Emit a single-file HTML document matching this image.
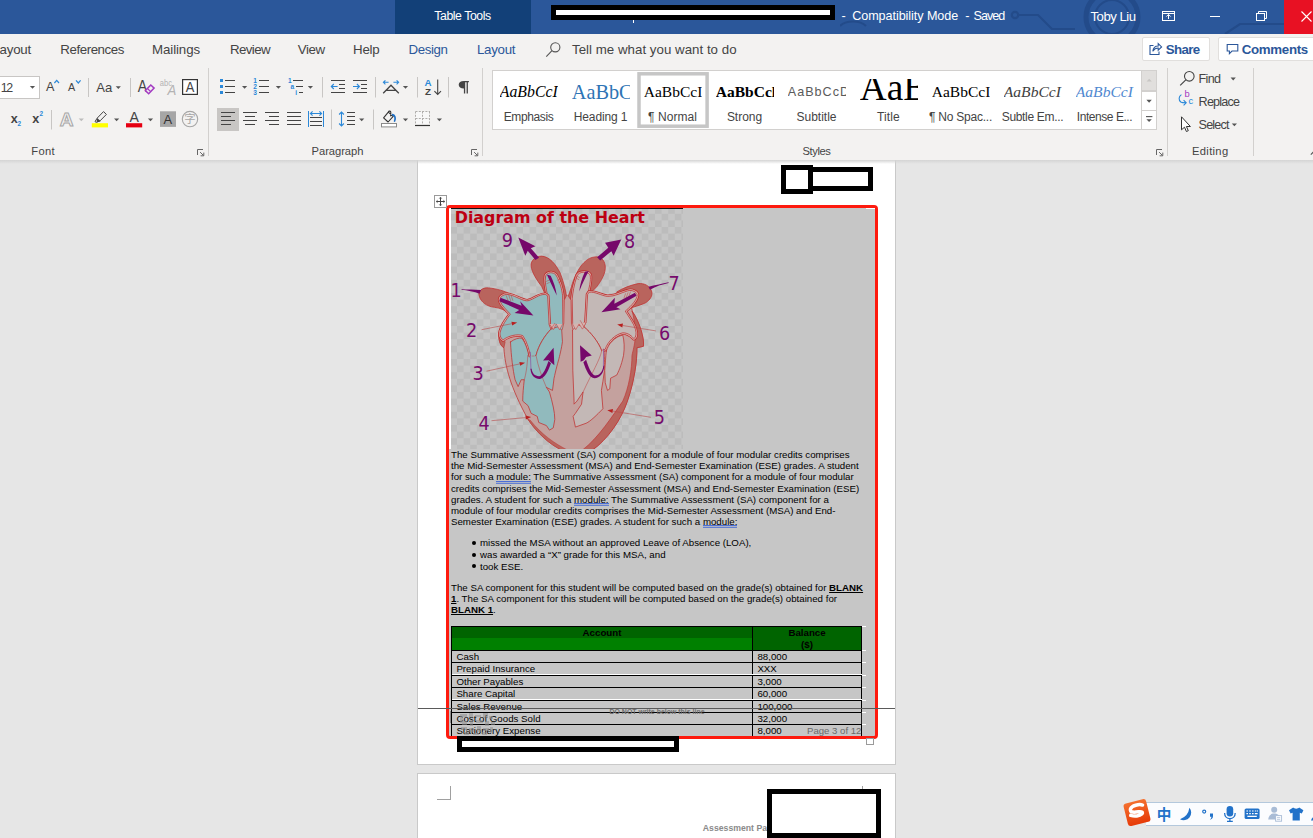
<!DOCTYPE html>
<html lang="en">
<head>
<meta charset="utf-8">
<title>Word</title>
<style>
*{box-sizing:border-box;margin:0;padding:0}
html,body{width:1313px;height:838px;overflow:hidden;background:#e6e6e6;font-family:"Liberation Sans",sans-serif;color:#444}
.abs,#app>div,#app>svg,#app>span{position:absolute}
#app{position:relative;width:1313px;height:838px;overflow:hidden}
/* title bar */
#title{left:0;top:0;width:1313px;height:34px;background:#2b579a}
#tt{left:395px;top:0;width:136px;height:34px;background:#124078;color:#fff;font-size:12px;text-align:center;line-height:33px}
.tw{color:#fff;font-size:12.5px;white-space:nowrap;line-height:16px}
#close{left:1284px;top:0;width:29px;height:34px;background:#e81123}
/* tabs */
#tabs{left:0;top:34px;width:1313px;height:32px;background:#f3f2f1}
.tab{top:41px;font-size:12.6px;color:#444;white-space:nowrap;line-height:16px}
.tab.b{color:#2b579a}
.btn{top:37px;height:24px;background:#fff;border:1px solid #e1dfdd;border-radius:2px}
/* ribbon */
#ribbon{left:0;top:66px;width:1313px;height:94px;background:#f3f2f1}
.sep{top:68px;width:1px;height:88px;background:#d2d0ce}
.glabel{top:145px;font-size:11.6px;color:#444;white-space:nowrap;line-height:14px}
/* doc */
#page1{left:417px;top:160px;width:479px;height:605px;background:#fff;border:1px solid #c9c9c9;border-top:none}
#page2{left:417px;top:773px;width:479px;height:80px;background:#fff;border:1px solid #c9c9c9}
#shadow{left:0;top:160px;width:1313px;height:4px;background:linear-gradient(#d4d4d4,rgba(230,230,230,0))}
#sel{left:449px;top:208px;width:426px;height:528px;background:#c6c6c6}
#red{left:446px;top:205px;width:432px;height:534px;border:3px solid #fe1a0e;border-radius:4px}
.t{font-family:"Liberation Sans",sans-serif;font-size:9.71px;line-height:11px;color:#000;white-space:nowrap;left:451px}
.t b{font-weight:700}
.u{text-decoration:underline}
.sq{position:relative}
.sq::after{content:"";position:absolute;left:0;right:0;top:9.5px;height:1px;background:#3f66d8;box-shadow:0 1.8px 0 #3f66d8;opacity:.9}
.dot{width:4px;height:4px;border-radius:50%;background:#000}
.blk{background:#000}
.wht{background:#fff}
</style>
</head>
<body>
<div id="app">
<!-- TITLE BAR -->
<div id="title"></div>
<div id="tt"></div>
<div id="close"></div>
<svg style="left:840px;top:0" width="473" height="34" viewBox="840 0 473 34"><g fill="none" stroke="#234b8a" stroke-width="2.2"><circle cx="1015" cy="15" r="3.2"/><path d="M1018 15 H1038 L1052 29 H1075"/><circle cx="1112" cy="17" r="26" stroke-width="5"/><circle cx="1112" cy="17" r="17" stroke-width="2"/><path d="M1225 34 L1240 24 H1284"/><path d="M840 26 C846 20 860 20 866 26"/></g></svg>
<div class="blk" style="left:551px;top:5px;width:284px;height:15px"></div>
<div class="wht" style="left:556px;top:10px;width:274px;height:5px"></div>
<div class="wht" style="left:633px;top:20px;width:1px;height:3px"></div>
<div style="left:434.3px;top:7.84px;font-family:'Liberation Sans',sans-serif;font-size:12.3px;line-height:16px;color:#fff;letter-spacing:-0.438px;white-space:nowrap;">Table Tools</div>
<div style="left:841.4px;top:7.73px;font-family:'Liberation Sans',sans-serif;font-size:12.6px;line-height:16px;color:#fff;letter-spacing:-0.096px;white-space:nowrap;">-</div>
<div style="left:852.2px;top:7.73px;font-family:'Liberation Sans',sans-serif;font-size:12.6px;line-height:16px;color:#fff;letter-spacing:-0.064px;white-space:nowrap;">Compatibility Mode</div>
<div style="left:965.3px;top:7.73px;font-family:'Liberation Sans',sans-serif;font-size:12.6px;line-height:16px;color:#fff;letter-spacing:-0.096px;white-space:nowrap;">-</div>
<div style="left:973.6px;top:7.73px;font-family:'Liberation Sans',sans-serif;font-size:12.6px;line-height:16px;color:#fff;letter-spacing:-0.985px;white-space:nowrap;">Saved</div>
<div style="left:1090.5px;top:7.73px;font-family:'Liberation Sans',sans-serif;font-size:13.2px;line-height:17px;color:#fff;letter-spacing:-0.521px;white-space:nowrap;">Toby Liu</div>
<svg style="left:1155px;top:5px" width="158" height="24" viewBox="1155 5 158 24" fill="none" stroke="#fff" stroke-width="1"><rect x="1162.5" y="11.5" width="12" height="9"/><path d="M1162.5 13.5h12" /><path d="M1168.5 19v-4.2M1166.3 16.6l2.2-2.2 2.2 2.2"/><path d="M1210 16.5h10"/><rect x="1256.5" y="13.5" width="8" height="7"/><path d="M1258.5 13.5v-2h8v7h-2"/><path d="M1301.5 11.5l10 10M1311.5 11.5l-10 10" stroke-width="1.1"/></svg>
<!-- TABS -->
<div id="tabs"></div>
<div style="left:-0.5px;top:40.69px;font-family:'Liberation Sans',sans-serif;font-size:13.3px;line-height:17px;color:#444;letter-spacing:-0.207px;white-space:nowrap;">ayout</div>
<div style="left:60.3px;top:40.69px;font-family:'Liberation Sans',sans-serif;font-size:13.3px;line-height:17px;color:#444;letter-spacing:-0.431px;white-space:nowrap;">References</div>
<div style="left:152.0px;top:40.69px;font-family:'Liberation Sans',sans-serif;font-size:13.3px;line-height:17px;color:#444;letter-spacing:-0.098px;white-space:nowrap;">Mailings</div>
<div style="left:229.9px;top:40.69px;font-family:'Liberation Sans',sans-serif;font-size:13.3px;line-height:17px;color:#444;letter-spacing:-0.568px;white-space:nowrap;">Review</div>
<div style="left:297.7px;top:40.69px;font-family:'Liberation Sans',sans-serif;font-size:13.3px;line-height:17px;color:#444;letter-spacing:-0.347px;white-space:nowrap;">View</div>
<div style="left:353.1px;top:40.69px;font-family:'Liberation Sans',sans-serif;font-size:13.3px;line-height:17px;color:#444;letter-spacing:-0.238px;white-space:nowrap;">Help</div>
<div style="left:408.4px;top:40.69px;font-family:'Liberation Sans',sans-serif;font-size:13.3px;line-height:17px;color:#2b579a;letter-spacing:-0.367px;white-space:nowrap;">Design</div>
<div style="left:477.0px;top:40.69px;font-family:'Liberation Sans',sans-serif;font-size:13.3px;line-height:17px;color:#2b579a;letter-spacing:-0.289px;white-space:nowrap;">Layout</div>
<div style="left:572.0px;top:40.69px;font-family:'Liberation Sans',sans-serif;font-size:13.3px;line-height:17px;color:#444;letter-spacing:0.018px;white-space:nowrap;">Tell me what you want to do</div>
<svg style="left:545px;top:41px" width="17" height="17" viewBox="0 0 17 17" fill="none" stroke="#555" stroke-width="1.1"><circle cx="10.3" cy="6.3" r="4.6"/><path d="M7 9.7L1.3 15.6"/></svg>
<div class="btn" style="left:1142px;width:68px"></div>
<div class="btn" style="left:1218px;width:100px"></div>
<svg style="left:1148px;top:41px" width="15" height="16" viewBox="0 0 15 16" fill="none" stroke="#2b579a" stroke-width="1.1"><path d="M5.5 4.5H2V13.5H11V10.5"/><path d="M4.8 10.2C5.2 6.8 7.4 5 10.2 5V2.6L13.6 5.9L10.2 9.2V7C8 7 6.2 8 4.8 10.2Z"/></svg>
<div style="left:1165.7px;top:40.69px;font-family:'Liberation Sans',sans-serif;font-size:13.3px;line-height:17px;color:#2b579a;letter-spacing:-0.613px;white-space:nowrap;font-weight:700;transform:scaleY(.97);">Share</div>
<svg style="left:1225px;top:42px" width="15" height="14" viewBox="0 0 15 14" fill="none" stroke="#2b579a" stroke-width="1.1"><path d="M2.2 2.5H12.8V9H7L4.4 11.6V9H2.2Z"/></svg>
<div style="left:1241.8px;top:40.69px;font-family:'Liberation Sans',sans-serif;font-size:13.3px;line-height:17px;color:#2b579a;letter-spacing:-0.328px;white-space:nowrap;font-weight:700;">Comments</div>
<!-- RIBBON -->
<div id="ribbon"></div>
<div class="sep" style="left:208.0px"></div>
<div class="sep" style="left:482.0px"></div>
<div class="sep" style="left:1167.0px"></div>
<div class="sep" style="left:1253.0px"></div>
<div style="left:31.3px;top:144.32px;font-family:'Liberation Sans',sans-serif;font-size:11.2px;line-height:15px;color:#444;letter-spacing:0.272px;white-space:nowrap;">Font</div>
<div style="left:311.6px;top:144.32px;font-family:'Liberation Sans',sans-serif;font-size:11.2px;line-height:15px;color:#444;letter-spacing:-0.056px;white-space:nowrap;">Paragraph</div>
<div style="left:802.6px;top:144.32px;font-family:'Liberation Sans',sans-serif;font-size:11.2px;line-height:15px;color:#444;letter-spacing:-0.433px;white-space:nowrap;">Styles</div>
<div style="left:1192.0px;top:144.32px;font-family:'Liberation Sans',sans-serif;font-size:11.2px;line-height:15px;color:#444;letter-spacing:0.322px;white-space:nowrap;">Editing</div>
<div style="left:-2px;top:76px;width:42px;height:23px;background:#fff;border:1px solid #c8c6c4"></div>
<div style="left:0.8px;top:79.70px;font-family:'Liberation Sans',sans-serif;font-size:12.4px;line-height:16px;color:#444;letter-spacing:-1.396px;white-space:nowrap;">12</div>
<svg style="left:0;top:66px" width="1313" height="94" viewBox="0 66 1313 94" font-family="Liberation Sans,sans-serif"><path d="M29.9 86.0h5.2l-2.6 2.8z" fill="#555" stroke="none"/>
<text x="46" y="91" font-size="12.6" fill="#444">A</text><path d="M54.4 83l2.3-2.6 2.3 2.6" stroke="#2b88d8" stroke-width="1.2" fill="none"/>
<text x="68" y="91" font-size="10.8" fill="#444">A</text><path d="M76 80.4l2.3 2.6 2.3-2.6" stroke="#2b88d8" stroke-width="1.2" fill="none"/>
<path d="M88.5 78V97" stroke="#c8c6c4" stroke-width="1" fill="none"/>
<text x="96.3" y="92" font-size="13" fill="#444" textLength="16" lengthAdjust="spacingAndGlyphs">Aa</text><path d="M115.7 86.3h5.2l-2.6 2.8z" fill="#555" stroke="none"/>
<path d="M130.5 78V97" stroke="#c8c6c4" stroke-width="1" fill="none"/>
<text x="137.8" y="91.9" font-size="17.4" fill="#444" textLength="9.4" lengthAdjust="spacingAndGlyphs">A</text><path d="M145.4 90.6l5.4-5.6 3.3 3.1-5.4 5.6z" stroke="#a33bc2" stroke-width="1.5" fill="#f3f2f1"/><path d="M147.4 88.5l3.3 3.1" stroke="#a33bc2" stroke-width="1.2"/>
<text x="159.8" y="85.7" font-size="8.2" fill="#b3b3b3" textLength="12.2" lengthAdjust="spacingAndGlyphs">abc</text><text x="167.4" y="94.8" font-size="15.2" font-style="italic" fill="#b3b3b3" textLength="8.8" lengthAdjust="spacingAndGlyphs">A</text>
<rect x="182.6" y="79.6" width="14.8" height="14.8" fill="#fff" stroke="#333" stroke-width="1.2"/><text x="190" y="92.3" font-size="14" fill="#444" text-anchor="middle" textLength="8.6" lengthAdjust="spacingAndGlyphs">A</text>
<text x="10.8" y="123" font-size="12.6" font-weight="700" fill="#444">x</text><text x="17.6" y="126.4" font-size="6.4" font-weight="700" fill="#2b88d8">2</text>
<text x="32.2" y="123" font-size="12.6" font-weight="700" fill="#444">x</text><text x="39.6" y="116.4" font-size="6.4" font-weight="700" fill="#2b88d8">2</text>
<path d="M51.5 110V129.5" stroke="#c8c6c4" stroke-width="1" fill="none"/>
<text x="66.7" y="125.7" font-size="19" font-weight="700" fill="#f3f2f1" stroke="#a6a6a6" stroke-width="1" text-anchor="middle">A</text><path d="M78.7 118.5h5.2l-2.6 2.8z" fill="#bcbcbc" stroke="none"/>
<rect x="91.8" y="123.2" width="16.2" height="4.2" fill="#ffff00"/><path d="M95 121.6l2.3-3.6 6.2-6.4 2.9 2.8-6.3 6.4-3.6 1.6z" fill="none" stroke="#444" stroke-width="1"/><path d="M97.3 118l3.4 3.2-2.6.9-1.6-.3z" fill="#444"/><path d="M114.0 118.5h5.2l-2.6 2.8z" fill="#555" stroke="none"/>
<rect x="126" y="123.2" width="16.2" height="4.2" fill="#e60012"/><text x="134.3" y="121.7" font-size="14.6" fill="#444" text-anchor="middle" textLength="9.4" lengthAdjust="spacingAndGlyphs">A</text><path d="M147.9 118.5h5.2l-2.6 2.8z" fill="#555" stroke="none"/>
<rect x="160" y="111.3" width="16" height="15.6" fill="#a6a6a6"/><text x="167.8" y="124.1" font-size="13.4" fill="#333" text-anchor="middle" textLength="8.6" lengthAdjust="spacingAndGlyphs">A</text>
<circle cx="190" cy="119.1" r="7.7" fill="none" stroke="#a6a6a6" stroke-width="1.1"/><text x="190" y="123.4" font-size="11.4" fill="#a6a6a6" text-anchor="middle" font-family="Noto Sans CJK SC,sans-serif">字</text>
<path d="M203.0 149.5H197.5V155" stroke="#666" stroke-width="1" fill="none"/><path d="M200.1 152.1l3.4 3.4M203.8 152.6v3.2h-3.2" stroke="#666" stroke-width="1" fill="none"/>
<path d="M477.0 149.5H471.5V155" stroke="#666" stroke-width="1" fill="none"/><path d="M474.1 152.1l3.4 3.4M477.8 152.6v3.2h-3.2" stroke="#666" stroke-width="1" fill="none"/>
<path d="M1162.0 149.5H1156.5V155" stroke="#666" stroke-width="1" fill="none"/><path d="M1159.1 152.1l3.4 3.4M1162.8 152.6v3.2h-3.2" stroke="#666" stroke-width="1" fill="none"/>
<path d="M225 80.5H235M225 86.5H235M225 92.5H235" stroke="#444" stroke-width="1" fill="none"/>
<rect x="220" y="79.0" width="3" height="3" fill="#2b88d8"/>
<rect x="220" y="85.0" width="3" height="3" fill="#2b88d8"/>
<rect x="220" y="91.0" width="3" height="3" fill="#2b88d8"/>
<path d="M242.0 86.0h5.2l-2.6 2.8z" fill="#555" stroke="none"/>
<path d="M259 80.5H269M259 86.5H269M259 92.5H269" stroke="#444" stroke-width="1" fill="none"/>
<text x="253.3" y="82.8" font-size="6.6" font-weight="700" fill="#2b88d8">1</text>
<text x="253.3" y="88.8" font-size="6.6" font-weight="700" fill="#2b88d8">2</text>
<text x="253.3" y="94.8" font-size="6.6" font-weight="700" fill="#2b88d8">3</text>
<path d="M275.8 86.0h5.2l-2.6 2.8z" fill="#555" stroke="none"/>
<path d="M293 80.5H303M296 86.5H303M299 92.5H303" stroke="#444" stroke-width="1" fill="none"/>
<text x="288" y="82.8" font-size="6.6" font-weight="700" fill="#2b88d8">1</text><text x="290.6" y="89" font-size="6.6" font-weight="700" fill="#2b88d8">a</text><text x="295.3" y="95.2" font-size="6.6" font-weight="700" fill="#2b88d8">i</text>
<path d="M307.8 86.0h5.2l-2.6 2.8z" fill="#555" stroke="none"/>
<path d="M322.5 77V97.5" stroke="#c8c6c4" stroke-width="1" fill="none"/>
<path d="M331 80.5H345M339 84.5H345M339 88.5H345M331 92.5H345" stroke="#444" stroke-width="1" fill="none"/><path d="M331.3 86.5H337.6M333.8 84l-2.5 2.5 2.5 2.5" stroke="#2b88d8" stroke-width="1.1" fill="none"/>
<path d="M353 80.5H367M361 84.5H367M361 88.5H367M353 92.5H367" stroke="#444" stroke-width="1" fill="none"/><path d="M353 86.5H359.4M356.9 84l2.5 2.5-2.5 2.5" stroke="#2b88d8" stroke-width="1.1" fill="none"/>
<path d="M375.5 77V97.5" stroke="#c8c6c4" stroke-width="1" fill="none"/>
<path d="M383.2 93.3L391 85.3L398.8 93.3M386.3 90.3H395.7" stroke="#444" stroke-width="1.3" fill="none"/><path d="M383.4 82.3H388.6M385.4 80.3l-2 2 2 2M393.4 82.3H398.6M396.6 80.3l2 2-2 2" stroke="#2b88d8" stroke-width="1.1" fill="none"/><path d="M402.9 86.0h5.2l-2.6 2.8z" fill="#555" stroke="none"/>
<path d="M417.5 77V97.5" stroke="#c8c6c4" stroke-width="1" fill="none"/>
<text x="424.4" y="86.2" font-size="9.8" font-weight="700" fill="#2b88d8">A</text><text x="424.9" y="94.9" font-size="9.8" font-weight="700" fill="#444">Z</text><path d="M437.7 79.5V94.4M434.4 91.2l3.3 3.3 3.3-3.3" stroke="#444" stroke-width="1.1" fill="none"/>
<path d="M448.5 77V97.5" stroke="#c8c6c4" stroke-width="1" fill="none"/>
<path d="M463.9 81H468.9V82.3H467.9V93.6H466.6V82.3H465.2V93.6H463.9V88.4C460.6 88.4 458.7 86.8 458.7 84.7C458.7 82.6 460.6 81 463.9 81Z" fill="#444"/>
<rect x="217" y="108" width="22" height="23" fill="#c8c6c4"/>
<path d="M221 112.5H235M221 116.5H231M221 120.5H235M221 124.5H231" stroke="#444" stroke-width="1" fill="none"/>
<path d="M243 112.5H257M245 116.5H255M243 120.5H257M245 124.5H255" stroke="#444" stroke-width="1" fill="none"/>
<path d="M265 112.5H279M269 116.5H279M265 120.5H279M269 124.5H279" stroke="#444" stroke-width="1" fill="none"/>
<path d="M287 112.5H301M287 116.5H301M287 120.5H301M287 124.5H301" stroke="#444" stroke-width="1" fill="none"/>
<path d="M308.5 111V127M323.5 111V127" stroke="#2b88d8" stroke-width="1" fill="none"/><path d="M310.4 113.5H321.6M312.6 111.3l-2.2 2.2 2.2 2.2M319.4 111.3l2.2 2.2-2.2 2.2" stroke="#2b88d8" stroke-width="1.1" fill="none"/><path d="M310 117.5H322M310 121.5H322M310 125.5H322" stroke="#444" stroke-width="1" fill="none"/>
<path d="M331.5 109.5V129.5" stroke="#c8c6c4" stroke-width="1" fill="none"/>
<path d="M341.5 112V126M339.1 114.5l2.4-2.4 2.4 2.4M339.1 123.5l2.4 2.4 2.4-2.4" stroke="#2b88d8" stroke-width="1.1" fill="none"/><path d="M347 112.5H355M347 116.5H355M347 120.5H355M347 124.5H355" stroke="#444" stroke-width="1" fill="none"/><path d="M359.1 118.5h5.2l-2.6 2.8z" fill="#555" stroke="none"/>
<path d="M373.5 109.5V129.5" stroke="#c8c6c4" stroke-width="1" fill="none"/>
<rect x="381.5" y="123.5" width="15" height="3.4" fill="#fff" stroke="#8a8a8a" stroke-width="1"/><path d="M383.6 117.8L388.3 112.2C388.8 110.6 390.9 110.8 390.8 112.4L390.6 116.4M388.3 112.2L393.2 116.4L388.1 122L383.6 117.8Z" fill="none" stroke="#333" stroke-width="1.1" stroke-linejoin="round"/><path d="M392.6 114.6C395 115.2 395.8 118.4 394.6 121" fill="none" stroke="#1e6fc5" stroke-width="1.7" stroke-linecap="round"/><path d="M402.9 118.5h5.2l-2.6 2.8z" fill="#555" stroke="none"/>
<rect x="415.5" y="111.5" width="14" height="12.5" fill="#f8f8f8" stroke="none"/><path d="M415.5 111.5H430M415.5 111.5V124M429.5 111.5V124M422.5 111.5V124M415.5 118.5H430" stroke="#b0aeac" stroke-width="1" stroke-dasharray="2 1.3" fill="none"/><path d="M415 125.5H430" stroke="#333" stroke-width="1.2"/><path d="M436.8 118.5h5.2l-2.6 2.8z" fill="#555" stroke="none"/></svg>
<div style="left:492px;top:70px;width:650px;height:60px;background:#fff;border:1px solid #d2d0ce"></div>
<svg style="left:636px;top:71px" width="74" height="58" viewBox="636 71 74 58"><rect x="639" y="73.8" width="68.1" height="52.4" fill="#fff" stroke="#c6c6c6" stroke-width="3.5"/></svg>
<div style="left:499.8px;top:78.8px;width:58.7px;height:26px;overflow:hidden"><div style="position:absolute;left:0;top:3.82px;font-family:'Liberation Serif',serif;font-size:15.8px;line-height:1;height:15.8px;color:#000;white-space:nowrap;font-style:italic;"><span style="display:block;line-height:normal">AaBbCcI</span></div></div>
<div style="left:503.7px;top:109.04px;font-family:'Liberation Sans',sans-serif;font-size:12px;line-height:16px;color:#444;letter-spacing:-0.386px;white-space:nowrap;">Emphasis</div>
<div style="left:571.8px;top:78.8px;width:58.7px;height:26px;overflow:hidden"><div style="position:absolute;left:0;top:2.21px;font-family:'Liberation Serif',serif;font-size:20.3px;line-height:1;height:20.3px;color:#2e74b5;white-space:nowrap;"><span style="display:block;line-height:normal">AaBbC</span></div></div>
<div style="left:573.8px;top:109.04px;font-family:'Liberation Sans',sans-serif;font-size:12px;line-height:16px;color:#444;letter-spacing:-0.145px;white-space:nowrap;">Heading 1</div>
<div style="left:643.8px;top:78.8px;width:58.7px;height:26px;overflow:hidden"><div style="position:absolute;left:0;top:4.09px;font-family:'Liberation Serif',serif;font-size:15.5px;line-height:1;height:15.5px;color:#000;white-space:nowrap;"><span style="display:block;line-height:normal">AaBbCcI</span></div></div>
<div style="left:648.0px;top:109.04px;font-family:'Liberation Sans',sans-serif;font-size:12px;line-height:16px;color:#444;letter-spacing:0.069px;white-space:nowrap;">¶ Normal</div>
<div style="left:715.8px;top:78.8px;width:58.7px;height:26px;overflow:hidden"><div style="position:absolute;left:0;top:4.09px;font-family:'Liberation Serif',serif;font-size:15.5px;line-height:1;height:15.5px;color:#000;white-space:nowrap;font-weight:700;"><span style="display:block;line-height:normal">AaBbCcl</span></div></div>
<div style="left:726.9px;top:109.04px;font-family:'Liberation Sans',sans-serif;font-size:12px;line-height:16px;color:#444;letter-spacing:-0.026px;white-space:nowrap;">Strong</div>
<div style="left:787.8px;top:78.8px;width:58.7px;height:26px;overflow:hidden"><div style="position:absolute;left:0;top:6.50px;font-family:'Liberation Sans',sans-serif;font-size:12.6px;line-height:1;height:12.6px;color:#5a5a5a;white-space:nowrap;letter-spacing:1.0px;"><span style="display:block;line-height:normal">AaBbCcD</span></div></div>
<div style="left:796.5px;top:109.04px;font-family:'Liberation Sans',sans-serif;font-size:12px;line-height:16px;color:#444;letter-spacing:-0.003px;white-space:nowrap;">Subtitle</div>
<div style="left:859.8px;top:78.8px;width:58.7px;height:26px;overflow:hidden"><div style="position:absolute;left:0;top:-13.13px;font-family:'Liberation Serif',serif;font-size:37.3px;line-height:1;height:37.3px;color:#000;white-space:nowrap;"><span style="display:block;line-height:normal">AaB</span></div></div>
<div style="left:877.1px;top:109.04px;font-family:'Liberation Sans',sans-serif;font-size:12px;line-height:16px;color:#444;letter-spacing:0.095px;white-space:nowrap;">Title</div>
<div style="left:931.8px;top:78.8px;width:58.7px;height:26px;overflow:hidden"><div style="position:absolute;left:0;top:4.09px;font-family:'Liberation Serif',serif;font-size:15.5px;line-height:1;height:15.5px;color:#000;white-space:nowrap;"><span style="display:block;line-height:normal">AaBbCcI</span></div></div>
<div style="left:929.0px;top:109.04px;font-family:'Liberation Sans',sans-serif;font-size:12px;line-height:16px;color:#444;letter-spacing:-0.234px;white-space:nowrap;">¶ No Spac...</div>
<div style="left:1003.8px;top:78.8px;width:58.7px;height:26px;overflow:hidden"><div style="position:absolute;left:0;top:4.00px;font-family:'Liberation Serif',serif;font-size:15.6px;line-height:1;height:15.6px;color:#404040;white-space:nowrap;font-style:italic;"><span style="display:block;line-height:normal">AaBbCcI</span></div></div>
<div style="left:1001.7px;top:109.04px;font-family:'Liberation Sans',sans-serif;font-size:12px;line-height:16px;color:#444;letter-spacing:-0.313px;white-space:nowrap;">Subtle Em...</div>
<div style="left:1075.8px;top:78.8px;width:58.7px;height:26px;overflow:hidden"><div style="position:absolute;left:0;top:4.00px;font-family:'Liberation Serif',serif;font-size:15.6px;line-height:1;height:15.6px;color:#4f88d0;white-space:nowrap;font-style:italic;"><span style="display:block;line-height:normal">AaBbCcI</span></div></div>
<div style="left:1076.8px;top:109.04px;font-family:'Liberation Sans',sans-serif;font-size:12px;line-height:16px;color:#444;letter-spacing:-0.450px;white-space:nowrap;">Intense E...</div>
<div style="left:1141px;top:70px;width:16px;height:21px;background:#e1dfdd;border:1px solid #d2d0ce"></div>
<div style="left:1141px;top:91px;width:16px;height:20px;background:#fff;border:1px solid #d2d0ce"></div>
<div style="left:1141px;top:110px;width:16px;height:20px;background:#fff;border:1px solid #d2d0ce"></div>
<svg style="left:0;top:66px" width="1313" height="94" viewBox="0 66 1313 94"><path d="M1146.6 81.6l2.6-2.8 2.6 2.8z" fill="#c8c6c4"/>
<path d="M1146.4 99.8h5.4l-2.7 2.9z" fill="#555"/>
<path d="M1146 116.6h6.4" stroke="#555" stroke-width="1.1"/><path d="M1146.4 119.2h5.4l-2.7 2.9z" fill="#555"/>
<circle cx="1189.3" cy="76.3" r="4.8" fill="none" stroke="#444" stroke-width="1.1"/><path d="M1185.8 79.8l-5.6 5.6" stroke="#444" stroke-width="1.2"/>
<path d="M1230.6 77.6h5.2l-2.6 2.8z" fill="#555"/>
<text x="1184.6" y="97.2" font-size="9.4" fill="#a33bc2" font-family="Liberation Sans,sans-serif">b</text><text x="1188.6" y="104.2" font-size="9.4" fill="#2b88d8" font-family="Liberation Sans,sans-serif">c</text>
<path d="M1181.4 94.6c-2.8 1.8-3 5.6-.6 7.4c1 .7 2.6.8 5 .8M1183.6 100.2l2.6 2.6-2.6 2.6" stroke="#2b88d8" stroke-width="1.1" fill="none"/>
<path d="M1181.5 116.8v13l3-2.6 1.9 4.3 1.9-.8-1.9-4.2h4z" fill="#fff" stroke="#333" stroke-width="1" stroke-linejoin="round"/>
<path d="M1231.8 123.4h5.2l-2.6 2.8z" fill="#555"/>
<path d="M1310.8 154.6l3-3 3 3" stroke="#555" stroke-width="1.1" fill="none"/></svg>
<div style="left:1198.6px;top:70.53px;font-family:'Liberation Sans',sans-serif;font-size:12.6px;line-height:16px;color:#444;letter-spacing:-0.678px;white-space:nowrap;">Find</div>
<div style="left:1198.6px;top:93.63px;font-family:'Liberation Sans',sans-serif;font-size:12.6px;line-height:16px;color:#444;letter-spacing:-0.790px;white-space:nowrap;">Replace</div>
<div style="left:1198.6px;top:116.53px;font-family:'Liberation Sans',sans-serif;font-size:12.6px;line-height:16px;color:#444;letter-spacing:-0.820px;white-space:nowrap;">Select</div>
<!-- DOC -->
<div id="page1"></div>
<div id="page2"></div>
<div id="shadow"></div>
<div id="sel"></div>
<div class="wht" style="left:449px;top:208px;width:2px;height:241px"></div>
<svg style="left:451px;top:208px" width="232" height="241" viewBox="0 0 232 241">
<defs><pattern id="chk" width="13.2" height="13.2" patternUnits="userSpaceOnUse" x="-0.6" y="-0.8"><rect width="13.2" height="13.2" fill="#c6c6c6"/><rect x="6.6" width="6.6" height="6.6" fill="#bcbcbc"/><rect y="6.6" width="6.6" height="6.6" fill="#bcbcbc"/></pattern>
<clipPath id="hc"><rect width="232" height="241"/></clipPath></defs>
<rect width="232" height="241" fill="url(#chk)"/>
<g clip-path="url(#hc)"><g transform="translate(19,42) scale(0.15279)" stroke-linejoin="round" stroke-linecap="round">
<path d="M 258,418 C 235,450 195,500 190,545 C 185,580 195,625 222,640 C 228,760 265,900 380,1109 C 440,1200 520,1270 600,1310 L 800,1310 C 900,1240 990,1110 1030,989 C 1075,860 1095,720 1092,640 L 1135,630 C 1142,580 1110,470 1062,402 L 1040,262 C 990,275 950,300 900,300 C 860,295 820,268 775,272 L 640,305 L 490,283 C 450,285 420,320 380,330 C 350,335 300,300 250,290 Z" fill="#c4a19e" stroke="#c03030" stroke-width="5"/>
<path d="M 1062,402 C 1110,470 1142,580 1135,630 L 1092,640 C 1095,720 1075,860 1030,989 C 990,1110 900,1240 800,1310 L 735,1310 C 840,1230 930,1090 1000,989 C 1040,900 1060,780 1060,690 C 1075,620 1100,560 1062,402 Z" fill="#b9645d" stroke="#c03030" stroke-width="4"/>
<path d="M 190,545 C 185,580 195,625 222,640 L 230,600 C 215,590 205,570 200,545 Z" fill="#b9645d" stroke="#c03030" stroke-width="4"/>
<path d="M 380,1109 C 440,1200 520,1270 600,1310 L 640,1310 C 560,1270 470,1210 395,1115 Z" fill="#b9645d" stroke="#c03030" stroke-width="3"/>
<path d="M 492,290 L 470,240 C 440,200 405,150 400,105 C 395,70 430,40 470,40 C 520,45 560,90 590,150 C 610,200 625,260 632,303 L 612,330 L 520,330 Z" fill="#b9645d" stroke="#c03030" stroke-width="5"/>
<path d="M 775,276 L 800,270 L 830,240 C 860,200 890,150 885,105 C 880,60 850,42 820,45 C 790,48 770,60 760,70 C 720,100 690,160 670,220 C 655,270 645,300 640,305 L 665,330 L 765,320 Z" fill="#b9645d" stroke="#c03030" stroke-width="5"/>
<path d="M 258,418 C 235,395 200,380 160,375 C 110,370 70,340 60,300 C 50,270 80,245 120,248 C 170,252 230,270 262,287 L 300,310 L 240,380 Z" fill="#b9645d" stroke="#c03030" stroke-width="5"/>
<path d="M 1018,400 C 1040,375 1100,370 1150,345 C 1180,325 1195,300 1190,275 C 1180,235 1140,215 1100,220 C 1050,230 1000,250 960,275 L 990,340 Z" fill="#b9645d" stroke="#c03030" stroke-width="5"/>
<path d="M 518,492 L 508,300 C 498,250 488,205 495,170 C 505,143 545,143 562,163 C 590,210 602,260 606,300 L 608,482" fill="none" stroke="#c03030" stroke-width="25" stroke-linecap="butt"/>
<path d="M 518,492 L 508,300 C 498,250 488,205 495,170 C 505,143 545,143 562,163 C 590,210 602,260 606,300 L 608,482" fill="none" stroke="#d4b4b0" stroke-width="14.5" stroke-linecap="butt"/>
<path d="M 495,170 C 505,143 545,143 562,163 C 590,210 602,260 606,300 L 608,480 L 604,540 L 530,540 L 518,490 L 508,300 C 498,250 488,205 495,170 Z" fill="#91babd" stroke="none"/>
<path d="M 518,492 L 508,300 C 498,250 488,205 495,170 C 505,143 545,143 562,163 C 590,210 602,260 606,300 L 608,482" fill="none" stroke="#c03030" stroke-width="5" stroke-linecap="butt"/>
<path d="M 672,482 L 669,320 C 672,280 682,225 700,170 C 712,140 768,137 786,163 C 794,200 778,250 770,290 L 760,472" fill="none" stroke="#c03030" stroke-width="25" stroke-linecap="butt"/>
<path d="M 672,482 L 669,320 C 672,280 682,225 700,170 C 712,140 768,137 786,163 C 794,200 778,250 770,290 L 760,472" fill="none" stroke="#d4b4b0" stroke-width="14.5" stroke-linecap="butt"/>
<path d="M 700,170 C 712,140 768,137 786,163 C 794,200 778,250 770,290 L 760,470 L 745,540 L 674,540 L 672,480 L 669,320 C 672,280 682,225 700,170 Z" fill="#c3b8b6" stroke="none"/>
<path d="M 672,482 L 669,320 C 672,280 682,225 700,170 C 712,140 768,137 786,163 C 794,200 778,250 770,290 L 760,472" fill="none" stroke="#c03030" stroke-width="5" stroke-linecap="butt"/>
<path d="M 197,335 C 187,305 230,282 262,294 C 300,302 350,337 380,332 C 420,322 450,290 492,290 L 508,300 L 518,490 L 530,518 C 490,560 450,620 432,690 L 397,700 C 388,660 375,600 345,560 C 310,547 250,562 217,588 C 198,577 192,552 200,530 C 207,500 240,450 264,420 C 242,395 207,365 197,335 Z" fill="none" stroke="#c03030" stroke-width="25" stroke-linecap="butt"/>
<path d="M 197,335 C 187,305 230,282 262,294 C 300,302 350,337 380,332 C 420,322 450,290 492,290 L 508,300 L 518,490 L 530,518 C 490,560 450,620 432,690 L 397,700 C 388,660 375,600 345,560 C 310,547 250,562 217,588 C 198,577 192,552 200,530 C 207,500 240,450 264,420 C 242,395 207,365 197,335 Z" fill="none" stroke="#d4b4b0" stroke-width="14.5" stroke-linecap="butt"/>
<path d="M 197,335 C 187,305 230,282 262,294 C 300,302 350,337 380,332 C 420,322 450,290 492,290 L 508,300 L 518,490 L 530,518 C 490,560 450,620 432,690 L 397,700 C 388,660 375,600 345,560 C 310,547 250,562 217,588 C 198,577 192,552 200,530 C 207,500 240,450 264,420 C 242,395 207,365 197,335 Z" fill="#91babd" stroke="none"/>
<path d="M 197,335 C 187,305 230,282 262,294 C 300,302 350,337 380,332 C 420,322 450,290 492,290 L 508,300 L 518,490 L 530,518 C 490,560 450,620 432,690 L 397,700 C 388,660 375,600 345,560 C 310,547 250,562 217,588 C 198,577 192,552 200,530 C 207,500 240,450 264,420 C 242,395 207,365 197,335 Z" fill="none" stroke="#c03030" stroke-width="5" stroke-linecap="butt"/>
<path d="M 1093,305 C 1103,277 1060,257 1030,268 C 990,279 950,304 900,304 C 860,299 820,272 780,276 L 770,290 L 760,470 L 745,502 C 790,540 840,600 862,660 L 885,650 C 900,600 950,552 1000,542 C 1040,542 1060,567 1073,580 C 1088,570 1090,545 1083,520 C 1073,480 1040,440 1016,400 C 1040,380 1083,340 1093,305 Z" fill="none" stroke="#c03030" stroke-width="25" stroke-linecap="butt"/>
<path d="M 1093,305 C 1103,277 1060,257 1030,268 C 990,279 950,304 900,304 C 860,299 820,272 780,276 L 770,290 L 760,470 L 745,502 C 790,540 840,600 862,660 L 885,650 C 900,600 950,552 1000,542 C 1040,542 1060,567 1073,580 C 1088,570 1090,545 1083,520 C 1073,480 1040,440 1016,400 C 1040,380 1083,340 1093,305 Z" fill="none" stroke="#d4b4b0" stroke-width="14.5" stroke-linecap="butt"/>
<path d="M 1093,305 C 1103,277 1060,257 1030,268 C 990,279 950,304 900,304 C 860,299 820,272 780,276 L 770,290 L 760,470 L 745,502 C 790,540 840,600 862,660 L 885,650 C 900,600 950,552 1000,542 C 1040,542 1060,567 1073,580 C 1088,570 1090,545 1083,520 C 1073,480 1040,440 1016,400 C 1040,380 1083,340 1093,305 Z" fill="#c3b8b6" stroke="none"/>
<path d="M 1093,305 C 1103,277 1060,257 1030,268 C 990,279 950,304 900,304 C 860,299 820,272 780,276 L 770,290 L 760,470 L 745,502 C 790,540 840,600 862,660 L 885,650 C 900,600 950,552 1000,542 C 1040,542 1060,567 1073,580 C 1088,570 1090,545 1083,520 C 1073,480 1040,440 1016,400 C 1040,380 1083,340 1093,305 Z" fill="none" stroke="#c03030" stroke-width="5" stroke-linecap="butt"/>
<path d="M 633,296 L 617,328 L 614,478 L 604,520 L 607,570 L 674,570 L 674,522 L 664,480 L 661,328 L 641,298 Z" fill="#c4a19e"/>
<path d="M 633,296 L 617,328 L 614,478 L 604,520 M 641,298 L 661,328 L 664,480 L 674,522" fill="none" stroke="#c03030" stroke-width="4"/>
<path d="M 265,602 C 290,582 320,574 340,577 C 365,610 380,660 386,700 L 432,690 C 450,620 490,560 530,518 L 572,503 L 600,522 L 605,600 C 600,640 585,700 580,719 C 560,790 555,820 550,839 L 540,919 L 500,899 L 520,929 C 540,1000 555,1060 555,1109 L 545,1164 L 520,1179 L 500,1149 L 450,1129 L 440,1089 L 400,1069 L 380,1019 L 345,989 C 345,940 350,900 355,849 L 335,849 L 315,894 L 295,849 C 280,780 270,700 265,602 Z" fill="#91babd" stroke="#c03030" stroke-width="5"/>
<path d="M 673,522 L 707,490 L 745,502 C 790,540 840,600 862,660 L 875,649 C 882,720 882,760 880,789 L 870,859 L 860,919 L 870,1039 C 830,1080 790,1120 760,1134 L 690,1159 L 675,1089 L 690,1069 L 730,1009 L 740,929 L 700,989 L 681,1009 L 681,989 L 673,789 Z" fill="#c3b8b6" stroke="#c03030" stroke-width="5"/>
<path d="M 892,662 C 905,612 950,567 1000,557 C 1010,600 1012,640 1005,689 C 990,760 970,800 960,819 L 920,839 L 915,909 L 900,919 L 885,869 L 882,789 C 886,740 888,700 892,662 Z" fill="#c3b8b6" stroke="#c03030" stroke-width="5"/>
<path d="M 391,699 L 427,691" stroke="#91babd" stroke-width="7" fill="none" stroke-linecap="butt"/>
<path d="M 867,659 L 872,654" stroke="#c3b8b6" stroke-width="7" fill="none" stroke-linecap="butt"/>
<path d="M 520,484 L 545,522 L 564,484 L 586,522 L 607,484" fill="#d4b4b0" stroke="#c03030" stroke-width="3"/>
<path d="M 671,484 L 692,522 L 714,484 L 736,518 L 760,474" fill="#d4b4b0" stroke="#c03030" stroke-width="3"/>
<path d="M 378,690 C 375,760 365,820 355,850 M 432,690 C 445,760 470,830 500,900 M 862,660 C 850,720 800,800 740,930 M 530,518 L 555,480 M 745,502 L 722,462" fill="none" stroke="#c03030" stroke-width="3"/>
<path d="M 238,300 l 12,35 M 254,296 l 12,35 M 270,300 l 10,30 M 1050,275 l -12,32 M 1034,280 l -12,32 M 1018,286 l -10,28 M 500,205 l 18,-8 M 503,220 l 16,-7 M 590,190 l -16,8 M 595,205 l -14,8 M 700,170 l 16,10 M 698,185 l 14,9" fill="none" stroke="#c03030" stroke-width="3"/>
<path d="M 200,312 L 338,365 L 328,335 L 415,428 L 292,412 L 322,392 L 192,335 Z" fill="#76086a"/>
<path d="M 1080,280 L 945,352 L 948,312 L 860,408 L 985,388 L 958,375 L 1090,300 Z" fill="#76086a"/>
<path d="M 316,-81 L 428,-25 L 398,-12 L 452,50 L 428,66 L 378,5 L 362,38 Z" fill="#76086a"/>
<path d="M 990,-68 L 940,38 L 925,8 L 852,68 L 832,48 L 905,-15 L 884,-48 Z" fill="#76086a"/>
<path d="M 503,160 L 528,168 C 548,210 562,250 568,297 C 545,250 520,200 503,160 Z" fill="#76086a"/>
<path d="M 777,138 L 752,142 C 733,180 719,230 715,272 C 735,220 755,180 777,138 Z" fill="#76086a"/>
<path d="M -55,257 C -20,258 30,260 72,262 L 62,286 C 30,272 -20,262 -55,261 Z" fill="#76086a"/>
<path d="M 1300,211 C 1260,220 1210,230 1168,240 L 1178,260 C 1215,238 1260,225 1300,216 Z" fill="#76086a"/>
<path d="M 395,669 L 399,783" fill="none" stroke="#8d5aa6" stroke-width="5"/>
<path d="M 396,778 C 398,826 430,846 458,844 C 492,838 512,790 530,742 L 514,726 C 498,772 480,815 455,826 C 425,828 408,810 403,778 Z" fill="#76086a"/>
<path d="M 547,640 L 478,724 L 515,722 L 535,740 L 552,754 Z" fill="#76086a"/>
<path d="M 875,649 L 873,760" fill="none" stroke="#8d5aa6" stroke-width="5"/>
<path d="M 879,758 C 877,806 848,840 815,840 C 782,836 760,790 742,735 L 760,718 C 775,765 792,812 818,822 C 845,822 868,800 873,758 Z" fill="#76086a"/>
<path d="M 720,624 L 797,690 L 760,700 L 745,722 L 724,732 Z" fill="#76086a"/>
</g>
<path d="M 30.6,121.7 L 60.8,115.7" stroke="#b84a4a" stroke-width="0.6" fill="none"/>
<path d="M 66.2,114.6 L 61.2,117.6 L 60.4,113.7 Z" fill="#b82020"/>
<path d="M 204.8,122.9 L 171.6,117.5" stroke="#b84a4a" stroke-width="0.6" fill="none"/>
<path d="M 166.2,116.6 L 172.0,115.5 L 171.3,119.5 Z" fill="#b82020"/>
<path d="M 35.5,163.2 L 68.7,155.9" stroke="#b84a4a" stroke-width="0.6" fill="none"/>
<path d="M 74.1,154.7 L 69.2,157.8 L 68.3,153.9 Z" fill="#b82020"/>
<path d="M 40.5,212.7 L 74.6,209.6" stroke="#b84a4a" stroke-width="0.6" fill="none"/>
<path d="M 80.1,209.1 L 74.8,211.6 L 74.4,207.6 Z" fill="#b82020"/>
<path d="M 199.9,209.3 L 161.7,203.1" stroke="#b84a4a" stroke-width="0.6" fill="none"/>
<path d="M 156.3,202.2 L 162.0,201.1 L 161.4,205.1 Z" fill="#b82020"/>
<text x="56.3" y="38.6" text-anchor="middle" font-family="DejaVu Sans Condensed,DejaVu Sans,sans-serif" font-size="19.6" fill="#760a6c">9</text>
<text x="178.6" y="39.6" text-anchor="middle" font-family="DejaVu Sans Condensed,DejaVu Sans,sans-serif" font-size="19.6" fill="#760a6c">8</text>
<text x="5" y="89" text-anchor="middle" font-family="DejaVu Sans Condensed,DejaVu Sans,sans-serif" font-size="19.6" fill="#760a6c">1</text>
<text x="223.2" y="82" text-anchor="middle" font-family="DejaVu Sans Condensed,DejaVu Sans,sans-serif" font-size="19.6" fill="#760a6c">7</text>
<text x="20.7" y="129" text-anchor="middle" font-family="DejaVu Sans Condensed,DejaVu Sans,sans-serif" font-size="19.6" fill="#760a6c">2</text>
<text x="213.7" y="131.6" text-anchor="middle" font-family="DejaVu Sans Condensed,DejaVu Sans,sans-serif" font-size="19.6" fill="#760a6c">6</text>
<text x="27" y="171.5" text-anchor="middle" font-family="DejaVu Sans Condensed,DejaVu Sans,sans-serif" font-size="19.6" fill="#760a6c">3</text>
<text x="33" y="222" text-anchor="middle" font-family="DejaVu Sans Condensed,DejaVu Sans,sans-serif" font-size="19.6" fill="#760a6c">4</text>
<text x="208.4" y="216" text-anchor="middle" font-family="DejaVu Sans Condensed,DejaVu Sans,sans-serif" font-size="19.6" fill="#760a6c">5</text>
<text x="3.7" y="14.9" font-family="DejaVu Sans,sans-serif" font-weight="700" font-size="15.9" fill="#bd0012">Diagram of the Heart</text>
</g>
<rect width="232" height="1" fill="#111"/>
</svg>
<div class="t" style="left:451px;top:449.00px;">The Summative Assessment (SA) component for a module of four modular credits comprises</div>
<div class="t" style="left:451px;top:460.10px;">the Mid-Semester Assessment (MSA) and End-Semester Examination (ESE) grades. A student</div>
<div class="t" style="left:451px;top:471.30px;">for such a <span class="sq">module:</span> The Summative Assessment (SA) component for a module of four modular</div>
<div class="t" style="left:451px;top:482.80px;">credits comprises the Mid-Semester Assessment (MSA) and End-Semester Examination (ESE)</div>
<div class="t" style="left:451px;top:493.90px;">grades. A student for such a <span class="sq">module:</span> The Summative Assessment (SA) component for a</div>
<div class="t" style="left:451px;top:504.80px;">module of four modular credits comprises the Mid-Semester Assessment (MSA) and End-</div>
<div class="t" style="left:451px;top:515.90px;">Semester Examination (ESE) grades. A student for such a <span class="sq">module:</span></div>
<div class="dot" style="left:472px;top:540.8px"></div>
<div class="t" style="left:480px;top:537.10px;">missed the MSA without an approved Leave of Absence (LOA),</div>
<div class="dot" style="left:472px;top:552.7px"></div>
<div class="t" style="left:480px;top:549.00px;">was awarded a &ldquo;X&rdquo; grade for this MSA, and</div>
<div class="dot" style="left:472px;top:564.3px"></div>
<div class="t" style="left:480px;top:560.60px;">took ESE.</div>
<div class="t" style="left:451px;top:581.60px;">The SA component for this student will be computed based on the grade(s) obtained for <b class="u">BLANK</b></div>
<div class="t" style="left:451px;top:592.70px;"><b class="u">1</b>. The SA component for this student will be computed based on the grade(s) obtained for</div>
<div class="t" style="left:451px;top:603.80px;"><b class="u">BLANK 1</b>.</div>
<div class="blk" style="left:451px;top:626px;width:411px;height:25px"></div>
<div style="left:452px;top:627px;width:300px;height:11px;background:#006400"></div>
<div style="left:452px;top:638px;width:300px;height:12px;background:#008000"></div>
<div style="left:753px;top:627px;width:108px;height:23px;background:#006400"></div>
<div class="t" style="left:452px;top:626.70px;width:300px;text-align:center"><b>Account</b></div>
<div class="t" style="left:753px;top:626.70px;width:108px;text-align:center"><b>Balance</b></div>
<div class="t" style="left:753px;top:638.50px;width:108px;text-align:center"><b>($)</b></div>
<div class="blk" style="left:451px;top:650px;width:1px;height:86px"></div>
<div class="blk" style="left:752px;top:650px;width:1px;height:86px"></div>
<div class="blk" style="left:861px;top:650px;width:1px;height:86px"></div>
<div class="t" style="left:456.4px;top:650.50px;">Cash</div>
<div class="t" style="left:757.4px;top:650.50px;">88,000</div>
<div class="blk" style="left:451px;top:662px;width:411px;height:1px"></div>
<div class="t" style="left:456.4px;top:662.50px;">Prepaid Insurance</div>
<div class="t" style="left:757.4px;top:662.50px;">XXX</div>
<div class="blk" style="left:451px;top:675px;width:411px;height:1px"></div>
<div class="t" style="left:456.4px;top:675.80px;">Other Payables</div>
<div class="t" style="left:757.4px;top:675.80px;">3,000</div>
<div class="blk" style="left:451px;top:687px;width:411px;height:1px"></div>
<div class="t" style="left:456.4px;top:687.50px;">Share Capital</div>
<div class="t" style="left:757.4px;top:687.50px;">60,000</div>
<div class="blk" style="left:451px;top:700px;width:411px;height:1px"></div>
<div class="t" style="left:456.4px;top:701.10px;">Sales Revenue</div>
<div class="t" style="left:757.4px;top:701.10px;">100,000</div>
<div class="blk" style="left:451px;top:712px;width:411px;height:1px"></div>
<div class="t" style="left:456.4px;top:713.10px;">Cost of Goods Sold</div>
<div class="t" style="left:757.4px;top:713.10px;">32,000</div>
<div class="blk" style="left:451px;top:724px;width:411px;height:1px"></div>
<div class="t" style="left:456.4px;top:725.30px;">Stationery Expense</div>
<div class="t" style="left:757.4px;top:725.30px;">8,000</div>
<div class="wht" style="left:452px;top:674px;width:410px;height:1px"></div>
<div class="wht" style="left:452px;top:699px;width:410px;height:1px"></div>
<div class="wht" style="left:862px;top:626px;width:4px;height:1px"></div>
<div class="wht" style="left:862px;top:650px;width:4px;height:1px"></div>
<div class="wht" style="left:862px;top:662px;width:4px;height:1px"></div>
<div class="wht" style="left:862px;top:675px;width:4px;height:1px"></div>
<div class="wht" style="left:862px;top:687px;width:4px;height:1px"></div>
<div class="wht" style="left:862px;top:700px;width:4px;height:1px"></div>
<div class="wht" style="left:862px;top:712px;width:4px;height:1px"></div>
<div class="wht" style="left:862px;top:724px;width:4px;height:1px"></div>
<div id="red"></div>
<div class="blk" style="left:813px;top:167px;width:60px;height:24px"></div>
<div class="wht" style="left:813px;top:172px;width:55px;height:14px"></div>
<div class="blk" style="left:781px;top:165px;width:32px;height:29px"></div>
<div class="wht" style="left:786px;top:170px;width:22px;height:19px"></div>
<div class="wht" style="left:866px;top:208px;width:9px;height:1px"></div>
<div style="left:434px;top:195px;width:13px;height:13px;background:#fff;border:1px solid #9a9a9a"></div>
<svg style="left:434px;top:195px" width="13" height="13" viewBox="0 0 13 13" fill="none" stroke="#444" stroke-width="1"><path d="M6.5 2.5v8M2.5 6.5h8"/><path d="M5.3 3.6l1.2-1.4 1.2 1.4M5.3 9.4l1.2 1.4 1.2-1.4M3.6 5.3l-1.4 1.2 1.4 1.2M9.4 5.3l1.4 1.2-1.4 1.2" stroke-width="0.8"/></svg>
<div style="left:418px;top:708px;width:477px;height:1px;background:#5a5a5a"></div>
<div style="left:609.5px;top:708.3px;font-size:6.96px;line-height:8px;font-weight:700;color:#6e6e6e;white-space:nowrap">DO NOT write below this line</div>
<div style="left:807px;top:724.6px;font-size:9.6px;line-height:11px;color:#6a6a6a;white-space:nowrap;width:54.5px;overflow:hidden">Page 3 of 12</div>
<div style="left:450px;top:711px;width:1px;height:12px;background:#8c8c8c"></div>
<div style="left:861px;top:712px;width:1px;height:12px;background:#222"></div>
<svg style="left:458px;top:712px" width="40" height="24" viewBox="0 0 40 24" fill="#8e8e8e" opacity=".55"><rect x="2" y="2" width="7" height="3"/><rect x="2" y="2" width="3" height="9"/><rect x="11" y="1" width="4" height="4"/><rect x="17" y="3" width="6" height="2"/><rect x="25" y="1" width="5" height="5"/><rect x="31" y="4" width="4" height="3"/><rect x="4" y="9" width="5" height="4"/><rect x="12" y="8" width="3" height="6"/><rect x="18" y="8" width="7" height="3"/><rect x="27" y="9" width="4" height="5"/><rect x="33" y="10" width="4" height="3"/><rect x="3" y="15" width="6" height="3"/><rect x="11" y="16" width="5" height="4"/><rect x="19" y="14" width="4" height="6"/><rect x="25" y="16" width="6" height="3"/><rect x="32" y="15" width="3" height="6"/><rect x="6" y="20" width="5" height="3"/><rect x="15" y="21" width="6" height="2"/><rect x="24" y="20" width="5" height="3"/></svg>
<div class="blk" style="left:457px;top:736px;width:222px;height:16px"></div>
<div class="wht" style="left:462px;top:741px;width:212px;height:6px"></div>
<div style="left:866px;top:738px;width:8px;height:7px;background:#fff;border:1px solid #9a9a9a"></div>
<div style="left:450px;top:786px;width:1px;height:14px;background:#a0a0a0"></div>
<div style="left:437px;top:799px;width:14px;height:1px;background:#a0a0a0"></div>
<div style="left:862px;top:786px;width:1px;height:5px;background:#a0a0a0"></div>
<div style="left:702.8px;top:822.9px;font-size:8.7px;line-height:11px;font-weight:700;color:#8a8a8a;white-space:nowrap">Assessment Paper</div>
<div class="blk" style="left:767px;top:789px;width:114px;height:49px"></div>
<div class="wht" style="left:772px;top:794px;width:104px;height:39px"></div>
<div style="left:1146px;top:802px;width:180px;height:24px;background:#fbfcfe;border-top:1px solid #b4c8dc;border-bottom:1px solid #b4c8dc"></div>
<svg style="left:1113px;top:790px" width="200" height="48" viewBox="1113 790 200 48"><defs><linearGradient id="sg" x1="0" y1="0" x2="0" y2="1"><stop offset="0" stop-color="#f4702e"/><stop offset="1" stop-color="#e63a08"/></linearGradient></defs><g transform="rotate(-14 1137 812.5)"><rect x="1125.4" y="801" width="23.2" height="23.2" rx="3" fill="url(#sg)"/><path d="M1144.2 806.6c-3-2-10.6-2.2-12.6 0.8c-2.2 3.6 3 4.4 7 4.8c3.6 0.4 4.6 1.8 2.6 3c-2.4 1.4-7.6 0.6-11-1.4" fill="none" stroke="#fff" stroke-width="3.5" stroke-linecap="round"/></g><text x="1164" y="820.2" font-size="14.6" font-weight="700" fill="#2272c9" text-anchor="middle" font-family="Noto Sans CJK SC,sans-serif">中</text><path d="M1189.4 807.8A7.5 7.5 0 0 1 1180 819.2A14 14 0 0 0 1189.4 807.8Z" fill="#2272c9"/><circle cx="1204.2" cy="811.6" r="1.5" fill="none" stroke="#2272c9" stroke-width="1.2"/><path d="M1210 813.4h3v2.6c0 2-1.2 3.4-3.2 3.8c1-.8 1.6-1.8 1.6-3h-1.4z" fill="#2272c9"/><rect x="1226.6" y="806" width="6.6" height="10.6" rx="3.3" fill="#2272c9"/><path d="M1224.6 813c0 3.6 2.4 5.6 5.3 5.6c2.9 0 5.3-2 5.3-5.6M1229.9 818.6v2.6M1227 821.4h5.8" fill="none" stroke="#2272c9" stroke-width="1.3"/><rect x="1244.6" y="808.4" width="15" height="10.6" rx="1.6" fill="#2272c9"/><path d="M1246.4 811h1.6M1249.2 811h1.6M1252 811h1.6M1254.8 811h1.6M1257 811h1M1246.4 813.6h1.6M1249.2 813.6h1.6M1252 813.6h1.6M1254.8 813.6h2.8M1247.4 816.4h9.4" stroke="#fff" stroke-width="1.2" fill="none"/><circle cx="1274.2" cy="809.8" r="3" fill="#a9bcd6"/><path d="M1268.2 819.6c.4-4.6 3-6 6-6c3 0 5.6 1.4 6 6z" fill="#a9bcd6"/><rect x="1275.6" y="815.6" width="6" height="5.6" fill="#fbfcfe" stroke="#a9bcd6" stroke-width="0.9"/><path d="M1277 817.6h3.2M1277 819.4h3.2" stroke="#a9bcd6" stroke-width="0.7"/><path d="M1293.2 807.6l-4.2 2.6 1.6 3.4 2-.8v7.6h7.2v-7.6l2 .8 1.6-3.4-4.2-2.6c-1 1.4-5 1.4-6 0z" fill="#2272c9"/><path d="M1311 820.4c.6-2 1.6-3.2 3-3.6v3.6z" fill="#2272c9"/></svg>
</div>
</body>
</html>
